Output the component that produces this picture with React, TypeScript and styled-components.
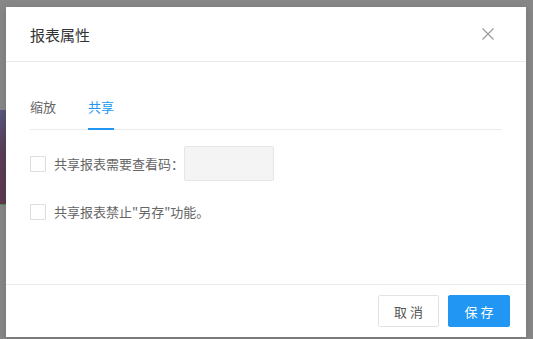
import { useState } from 'react';
import styled, { createGlobalStyle } from 'styled-components';

const GlobalStyle = createGlobalStyle`
  html, body { margin: 0; padding: 0; }
  body {
    width: 533px;
    height: 339px;
    overflow: hidden;
    font-family: "Noto Sans CJK SC", "Noto Sans", sans-serif;
    background: #878787;
  }
  * { box-sizing: border-box; }
`;

const Backdrop = styled.div`
  position: relative;
  width: 533px;
  height: 339px;
  background: #878787;
`;

// chart fragment peeking out from behind the modal mask
const BehindChart = styled.div`
  position: absolute;
  left: 0;
  top: 110px;
  width: 8px;
  height: 95px;
  background: linear-gradient(160deg, #56577e 0%, #5a3d55 45%, #5d3a4f 100%);
  border-bottom: 1px solid #4c8a5a;
`;

const Modal = styled.div`
  position: absolute;
  left: 6px;
  top: 7px;
  width: 520px;
  height: 330px;
  background: #fff;
  display: flex;
  flex-direction: column;
  box-shadow: 0 2px 8px rgba(0, 0, 0, 0.15);
`;

const Header = styled.div`
  height: 55px;
  padding: 0 32px 0 24px;
  display: flex;
  align-items: center;
  justify-content: space-between;
  border-bottom: 1px solid #ebebeb;
`;

const Title = styled.div`
  font-size: 15px;
  color: #333;
`;

const Close = styled.button`
  border: 0;
  background: none;
  padding: 0;
  width: 12px;
  height: 12px;
  cursor: pointer;
  display: flex;
`;

const Body = styled.div`
  flex: 1;
  padding: 35px 24px 0;
`;

const TabBar = styled.div`
  display: flex;
  gap: 32px;
  border-bottom: 1px solid #ececec;
`;

const Tab = styled.div<{ $active?: boolean }>`
  font-size: 13px;
  line-height: 20px;
  padding-bottom: 11px;
  color: ${(p) => (p.$active ? '#2196f3' : '#666')};
  border-bottom: 2px solid ${(p) => (p.$active ? '#2196f3' : 'transparent')};
  margin-bottom: -1px;
  cursor: pointer;
`;

const Option = styled.label<{ $top: number }>`
  display: flex;
  align-items: center;
  margin-top: ${(p) => p.$top}px;
  font-size: 13px;
  color: #666;
  cursor: pointer;
`;

const Box = styled.span<{ $checked?: boolean }>`
  width: 16px;
  height: 16px;
  border: 1px solid #ddd;
  border-radius: 1px;
  background: ${(p) => (p.$checked ? '#2196f3' : '#fff')};
  margin-right: 8px;
  flex-shrink: 0;
`;

const CodeInput = styled.input`
  width: 90px;
  height: 35px;
  margin-left: 0;
  border: 1px solid #e6e6e6;
  border-radius: 2px;
  background: #f4f4f4;
  outline: none;
`;

const Footer = styled.div`
  height: 53px;
  border-top: 1px solid #ebebeb;
  display: flex;
  justify-content: flex-end;
  align-items: flex-start;
  padding: 10px 16px 0 0;
  gap: 9px;
`;

const Button = styled.button<{ $primary?: boolean }>`
  height: 32px;
  width: ${(p) => (p.$primary ? 62 : 61)}px;
  font-family: inherit;
  font-size: 13px;
  letter-spacing: 3px;
  padding: 0 0 0 3px;
  border-radius: 2px;
  cursor: pointer;
  border: 1px solid ${(p) => (p.$primary ? '#2196f3' : '#e3e3e3')};
  background: ${(p) => (p.$primary ? '#2196f3' : '#fff')};
  color: ${(p) => (p.$primary ? '#fff' : '#555')};
`;

export default function App() {
  const [tab, setTab] = useState(1);
  const [needCode, setNeedCode] = useState(false);
  const [noSaveAs, setNoSaveAs] = useState(false);

  return (
    <Backdrop>
      <GlobalStyle />
      <BehindChart />
      <Modal>
        <Header>
          <Title>报表属性</Title>
          <Close aria-label="close">
            <svg width="12" height="12" viewBox="0 0 12 12">
              <path d="M0.5 0.5 L11.5 11.5 M11.5 0.5 L0.5 11.5" stroke="#999" strokeWidth="1.1" fill="none" />
            </svg>
          </Close>
        </Header>
        <Body>
          <TabBar>
            <Tab $active={tab === 0} onClick={() => setTab(0)}>缩放</Tab>
            <Tab $active={tab === 1} onClick={() => setTab(1)}>共享</Tab>
          </TabBar>
          <Option $top={16} onClick={() => setNeedCode(!needCode)}>
            <Box $checked={needCode} />
            共享报表需要查看码：
            <CodeInput onClick={(e) => e.stopPropagation()} />
          </Option>
          <Option $top={21} onClick={() => setNoSaveAs(!noSaveAs)}>
            <Box $checked={noSaveAs} />
            共享报表禁止"另存"功能。
          </Option>
        </Body>
        <Footer>
          <Button>取消</Button>
          <Button $primary>保存</Button>
        </Footer>
      </Modal>
    </Backdrop>
  );
}
